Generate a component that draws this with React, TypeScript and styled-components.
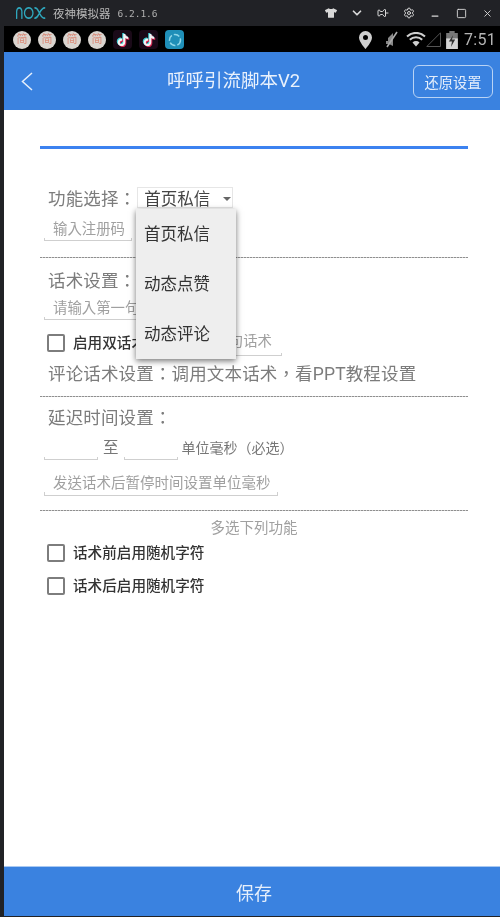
import React from "react";
import styled, { createGlobalStyle } from "styled-components";
import { SiTiktok } from "react-icons/si";
import { FaTshirt } from "react-icons/fa";
import { ChevronDown, Pin, Settings, Minus, Square, X } from "lucide-react";

const FONT = `Roboto, "Noto Sans CJK TC", sans-serif`;

const Global = createGlobalStyle`
  html, body { margin: 0; padding: 0; background: #212226; }
  #root { width: 500px; height: 917px; overflow: hidden; }
  * { box-sizing: border-box; }
  body { font-family: ${FONT}; text-spacing-trim: space-all; }
`;

const Emulator = styled.div`
  width: 500px; height: 917px; display: flex; flex-direction: column; background: #212226; filter: blur(0.35px);
`;
const TitleBar = styled.div`
  height: 26px; flex: none; display: flex; align-items: center; padding: 0 0 0 16px; color: #c4c4c4;
`;
const AppName = styled.span`
  font-size: 11.500px; margin-left: 7px; color: #b9b9b9;
`;
const Version = styled.span`
  font-family: "DejaVu Sans Mono", monospace; font-size: 9.500px; margin-left: 7px; color: #b0b0b0;
`;
const WindowTools = styled.div`
  margin-left: auto; display: flex; align-items: center; color: #d8d8d8;
`;
const ToolSlot = styled.span`
  width: 26px; height: 26px; display: flex; align-items: center; justify-content: center;
`;
const Device = styled.div`
  flex: 1; margin-left: 4px; display: flex; flex-direction: column; min-height: 0; margin-bottom: 1px;
`;
const StatusBar = styled.div`
  height: 26px; flex: none; background: #000; display: flex; align-items: center; padding: 1px 4px 0 9px; gap: 7px;
`;
const NoticeBadge = styled.span`
  width: 18px; height: 18px; border-radius: 50%; background: #d9d4cf; color: #d98a78; font-size: 11px;
  display: flex; align-items: center; justify-content: center; line-height: 1;
`;
const TikTokTile = styled.span`
  width: 19px; height: 19px; border-radius: 4px; background: #1a0a18; color: #f4f4f4;
  display: flex; align-items: center; justify-content: center;
  svg { filter: drop-shadow(1px 1px 0 #d82a55) drop-shadow(-0.5px -0.5px 0 #3fd3d8); }
`;
const NoxTile = styled.span`
  width: 19px; height: 19px; border-radius: 4px; background: #1f8fb8;
  display: flex; align-items: center; justify-content: center;
`;
const StatusRight = styled.div`
  margin-left: auto; display: flex; align-items: center; gap: 6px; color: #c9c9c9;
`;
const Clock = styled.span`
  font-size: 16px; color: #b4b4b4; letter-spacing: 0.3px;
`;
const Header = styled.header`
  position: relative; height: 58px; flex: none; background: #3a82e0; display: flex; align-items: center; color: #fff;
  padding: 0 7px 0 17px;
`;
const BackIcon = styled.div`
  display: flex; margin-right: auto;
`;
const HeaderTitle = styled.h1`
  position: absolute; left: 163px; top: 17px; margin: 0; font-weight: 400; font-size: 18.500px; line-height: 24px; color: #e9f1fc;
`;
const RestoreButton = styled.button`
  width: 80px; height: 33px; margin: 0; padding: 0; background: transparent; border: 1px solid #b9d3f5; border-radius: 6px;
  color: #e4eefb; font: 400 14.250px ${FONT};
`;
const Body = styled.main`
  position: relative; flex: 1; background: #fff; padding: 36px 32px 0 36px; min-height: 0; color: #808080;
`;
const BlueRule = styled.div`
  height: 3px; background: #3c82f0;
`;
const Row = styled.div<{ $h: number; $top?: number }>`
  display: flex; align-items: center; height: ${(p) => p.$h}px; margin-top: ${(p) => p.$top ?? 0}px; padding-left: 4px;
`;
const SectionLabel = styled.span`
  font-size: 17.500px; color: #7c7c7c; padding-left: 4px; white-space: nowrap; letter-spacing: 0.15px;
`;
const SelectBox = styled.div`
  width: 96px; height: 21px; margin-left: 1px; border: 1px solid #e6e6e6; display: flex; align-items: center; padding-left: 6px; color: #444; font-size: 16.500px; position: relative;
`;
const Caret = styled.span`
  position: absolute; right: 1px; top: 9px; border: 4px solid transparent; border-top: 4px solid #666; border-bottom: 0;
`;
const Field = styled.div<{ $w: number; $size?: number }>`
  width: ${(p) => p.$w}px; height: 100%; flex: none; padding: 0 0 5px 8px; display: flex; align-items: center; white-space: nowrap; overflow: hidden;
  font-size: ${(p) => p.$size ?? 14.4}px; color: #a0a0a0; border: 1px solid #cfcfcf; border-top: 0; border-image: linear-gradient(to bottom, transparent 85%, #cfcfcf 85%) 1;
`;
const RightField = styled(Field)`
  justify-content: flex-end; padding: 0 9px 5px 0; margin-left: 1px; height: 22px; font-weight: 400;
`;
const Dashed = styled.div<{ $top: number }>`
  margin-top: ${(p) => p.$top}px; height: 1px; background: repeating-linear-gradient(to right, #8f8f8f 0 2px, #d0d0d0 2px 3px);
`;
const CheckRow = styled.label<{ $h: number; $top: number }>`
  display: flex; align-items: flex-start; height: ${(p) => p.$h}px; margin-top: ${(p) => p.$top}px; padding-left: 7px; font-size: 14.600px; line-height: 18px; color: #333; font-weight: 500;
`;
const Box = styled.span`
  width: 18px; height: 18px; border: 2px solid #7d7d7d; border-radius: 2px; margin-right: 8px; flex: none;
`;
const To = styled.span`
  font-size: 15.500px; color: #777; margin: -2px 5px 0 5px; line-height: 20px;
`;
const Unit = styled.span`
  font-size: 14px; color: #777; margin: -4px 0 0 4px; white-space: nowrap;
`;
const Center = styled.div`
  text-align: center; font-size: 14.500px; line-height: 20px; margin-top: 8px; color: #a0a0a0;
`;
const SaveBar = styled.button`
  height: 50px; flex: none; width: 100%; background: #3a82e0; border: 0; border-top: 1px solid #a9c9f2; margin: 0; padding: 0 0 0 4px;
  color: #e6effb; font: 400 18px ${FONT};
`;
const Menu = styled.div`
  position: absolute; left: 132px; top: 99px; width: 100px; background: #eeeeee; box-shadow: 0 2px 6px rgba(0,0,0,.55);
`;
const MenuItem = styled.div`
  height: 50px; display: flex; align-items: center; padding: 0 0 2px 8px; font-size: 16.500px; color: #333;
`;

const NoxLogo = () => (
  <svg width="30" height="12" viewBox="0 0 46 14" preserveAspectRatio="none" fill="none" stroke="#2fa7bd" strokeWidth="2" strokeLinecap="round">
    <path d="M1 13V5a4 4 0 0 1 4-4 4 4 0 0 1 4 4v8" />
    <rect x="13" y="1" width="13" height="12" rx="6" />
    <path d="M29 1c4 0 5 3 7 6s3 6 8 6M44 1c-4 0-6 3-8 6s-3 6-7 6" />
  </svg>
);

const LocationPin = () => (
  <svg width="13" height="18" viewBox="0 0 13 18" style={{ marginRight: 6 }}>
    <path fillRule="evenodd" d="M6.500 0a6.500 6.500 0 0 1 6.500 6.500C13 11 6.500 18 6.500 18S0 11 0 6.500A6.500 6.500 0 0 1 6.500 0zm0 4a2.500 2.500 0 1 0 0 5 2.500 2.500 0 0 0 0-5z" fill="#cfcfcf" />
  </svg>
);
const Wifi = () => (
  <svg width="20" height="15" viewBox="0 0 20 15" fill="none" stroke="#cfcfcf" strokeWidth="2">
    <path d="M1 4.500a13 13 0 0 1 18 0" />
    <path d="M3.800 7.800a9 9 0 0 1 12.400 0" />
    <path d="M10 14.500 6.500 10.500a5 5 0 0 1 7 0z" fill="#cfcfcf" stroke="none" />
  </svg>
);
const Signal = () => (
  <svg width="15" height="15" viewBox="0 0 15 15" fill="none" stroke="#555" style={{ marginLeft: -6 }}><path d="M14.500 .8V14.500H.8z" /></svg>
);
const Battery = () => (
  <svg width="12" height="18" viewBox="0 0 11 17" style={{ marginLeft: -1 }}>
    <path d="M3 0h5v2h3v15H0V2h3z" fill="#777" /><path d="M0 7h11v10H0z" fill="#d5d5d5" /><path d="M6.500 4 2.500 10h3l-1 5 4-7h-3z" fill="#333" />
  </svg>
);
const Mute = () => (
  <svg width="16" height="17" viewBox="0 0 16 17" fill="none">
    <path d="M9 2 4 7v3h-2v3h3l4 2z" fill="#888" /><path d="M13 1 3 16" stroke="#aaa" strokeWidth="1.600" />
  </svg>
);
const BackChevron = () => (
  <svg width="12" height="19" viewBox="0 0 12 19" fill="none" stroke="#e6effb" strokeWidth="1.500"><path d="M11 1 1.500 9.500 11 18" /></svg>
);
const TikTok = () => (
  <TikTokTile><SiTiktok size={12} /></TikTokTile>
);
const Badge = () => <NoticeBadge>简</NoticeBadge>;

export default function App() {
  return (
    <Emulator>
      <Global />
      <TitleBar>
        <NoxLogo />
        <AppName>夜神模拟器</AppName>
        <Version>6.2.1.6</Version>
        <WindowTools>
          <ToolSlot><FaTshirt size={12} /></ToolSlot>
          <ToolSlot><ChevronDown size={14} strokeWidth={3} /></ToolSlot>
          <ToolSlot><Pin size={12} style={{ transform: "rotate(-90deg)" }} /></ToolSlot>
          <ToolSlot><Settings size={12} /></ToolSlot>
          <ToolSlot><Minus size={10} strokeWidth={3} style={{ marginTop: 5 }} /></ToolSlot>
          <ToolSlot><Square size={11} strokeWidth={2} /></ToolSlot>
          <ToolSlot><X size={11} strokeWidth={2} /></ToolSlot>
        </WindowTools>
      </TitleBar>
      <Device>
        <StatusBar>
          <Badge /><Badge /><Badge /><Badge />
          <TikTok /><TikTok />
          <NoxTile>
            <svg width="14" height="14" viewBox="0 0 14 14" fill="none" stroke="#8fd6e8" strokeWidth="1.500"><circle cx="7" cy="7" r="5.500" strokeDasharray="6 2" /></svg>
          </NoxTile>
          <StatusRight>
            <LocationPin />
            <Mute />
            <Wifi />
            <Signal />
            <Battery />
            <Clock>7:51</Clock>
          </StatusRight>
        </StatusBar>
        <Header>
          <BackIcon><BackChevron /></BackIcon>
          <HeaderTitle>呼呼引流脚本V2</HeaderTitle>
          <RestoreButton>还原设置</RestoreButton>
        </Header>
        <Body>
          <BlueRule />
          <Row $h={21} $top={38}>
            <SectionLabel>功能选择：</SectionLabel>
            <SelectBox>首页私信<Caret /></SelectBox>
          </Row>
          <Row $h={21} $top={12}><Field $w={88}>输入注册码</Field></Row>
          <Dashed $top={16} />
          <Row $h={22} $top={10}><SectionLabel>话术设置：</SectionLabel></Row>
          <Row $h={21} $top={9}><Field $w={138}>请输入第一句话术</Field></Row>
          <CheckRow $h={22} $top={14}>
            <Box />启用双话术
            <RightField $w={135}>请输入第二句话术</RightField>
          </CheckRow>
          <Row $h={24} $top={4}>
            <SectionLabel>评论话术设置：调用文本话术，看PPT教程设置</SectionLabel>
          </Row>
          <Dashed $top={12} />
          <Row $h={24} $top={7}><SectionLabel>延迟时间设置：</SectionLabel></Row>
          <Row $h={22} $top={10}>
            <Field $w={54} />
            <To>至</To>
            <Field $w={54} />
            <Unit>单位毫秒（必选）</Unit>
          </Row>
          <Row $h={24} $top={12}><Field $w={234} $size={14.5}>发送话术后暂停时间设置单位毫秒</Field></Row>
          <Dashed $top={14} />
          <Center>多选下列功能</Center>
          <CheckRow $h={18} $top={5}><Box />话术前启用随机字符</CheckRow>
          <CheckRow $h={18} $top={15}><Box />话术后启用随机字符</CheckRow>
          <Menu>
            <MenuItem>首页私信</MenuItem>
            <MenuItem>动态点赞</MenuItem>
            <MenuItem>动态评论</MenuItem>
          </Menu>
        </Body>
        <SaveBar>保存</SaveBar>
      </Device>
    </Emulator>
  );
}
